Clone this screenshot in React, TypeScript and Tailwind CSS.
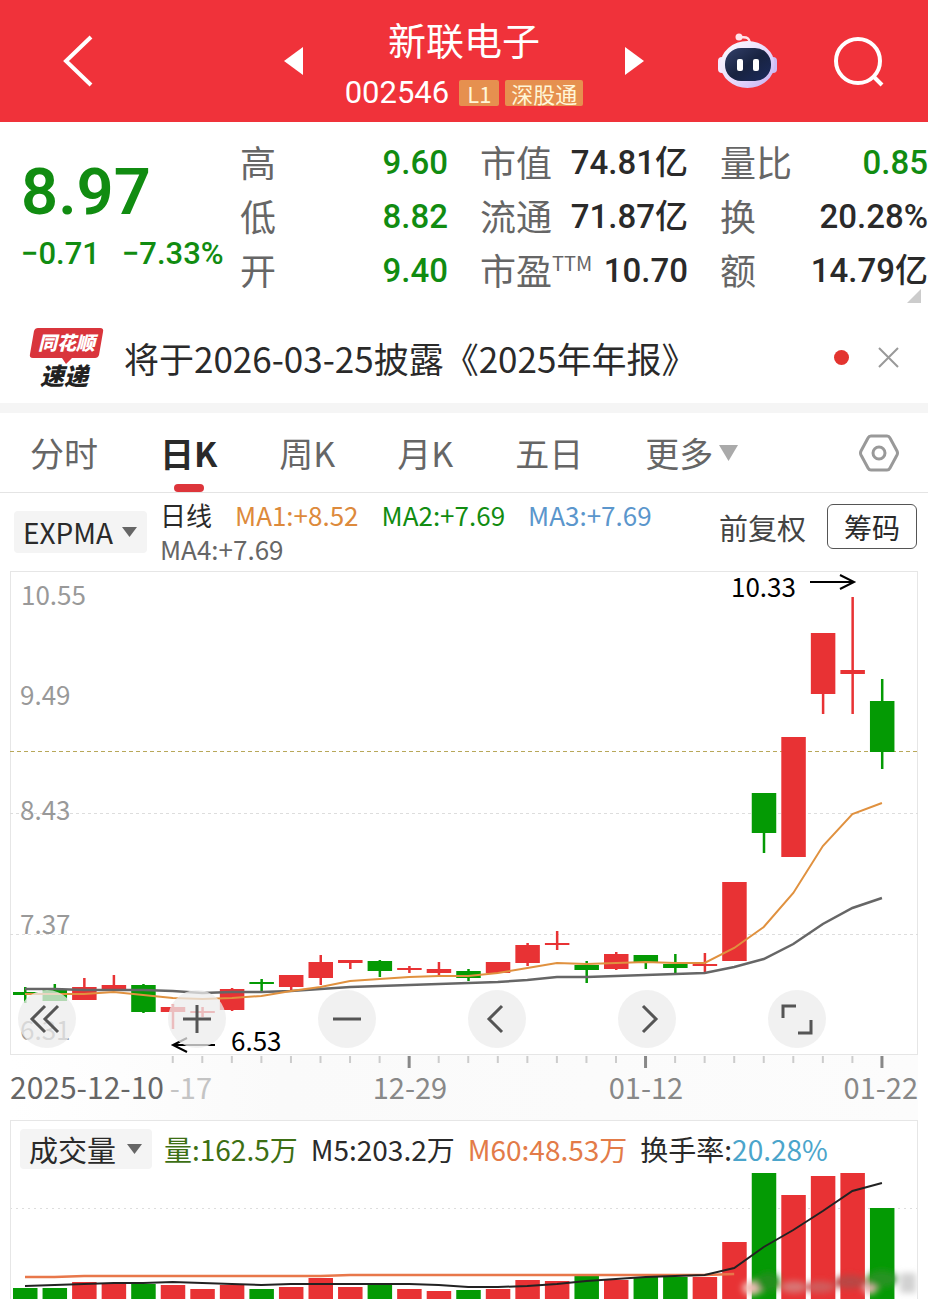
import React from 'react';

const RED = '#e83234';
const GREEN = '#049a04';
const STEP = 29.55;
const xAt = (i: number) => 15 + i * STEP;

type Candle = { up: boolean; high: number; top: number; bottom: number; low: number; vol: number };

const c = (up: boolean, high: number, top: number, bottom: number, low: number, vol: number): Candle => ({
  up, high, top, bottom, low, vol,
});

// high / body top / body bottom / low are measured down from the top of the price plot
const candles: Candle[] = [
  c(false, 416, 421, 424, 432, 11),
  c(false, 413, 418, 430, 430, 11),
  c(true, 407, 416, 429, 429, 17),
  c(true, 404, 414, 419, 419, 16),
  c(false, 413, 414, 441, 442, 15),
  c(true, 433, 436, 441, 458, 14),
  c(true, 436, 440, 442, 446, 10),
  c(true, 417, 418, 439, 440, 14),
  c(false, 408, 411, 413, 420, 10),
  c(true, 404, 404, 416, 419, 12),
  c(true, 384, 391, 407, 414, 21),
  c(true, 389, 389, 392, 398, 12),
  c(false, 389, 390, 400, 406, 14),
  c(true, 395, 397, 399, 402, 10),
  c(true, 391, 398, 402, 404, 8),
  c(false, 398, 400, 407, 410, 9),
  c(true, 391, 391, 402, 402, 10),
  c(true, 372, 374, 392, 395, 19),
  c(true, 360, 372, 374, 379, 18),
  c(false, 390, 394, 399, 412, 25),
  c(true, 381, 383, 398, 399, 19),
  c(false, 384, 384, 392, 398, 22),
  c(false, 383, 393, 397, 402, 22),
  c(true, 382, 393, 395, 403, 22),
  c(true, 311, 311, 390, 390, 57),
  c(false, 222, 222, 262, 282, 126),
  c(true, 166, 166, 286, 286, 104),
  c(true, 62, 62, 123, 143, 123),
  c(true, 26, 99, 103, 143, 126),
  c(false, 108, 130, 181, 198, 91),
];

const ma1 = [423, 423, 423, 421, 424, 427, 428, 427, 425, 420, 416, 410, 408, 406, 405, 405, 402, 397, 392, 393, 392, 391, 392, 392, 377, 356, 322, 275, 243, 232];
const ma2 = [418, 418, 419, 419, 419, 420, 422, 421, 421, 420, 418, 416, 415, 414, 413, 412, 411, 409, 406, 406, 405, 404, 403, 402, 396, 388, 373, 353, 337, 327];
const m5 = [117, 116, 115, 114, 114, 113, 114, 115, 116, 115, 115, 115, 115, 115, 116, 118, 118, 117, 115, 112, 110, 108, 107, 106, 99, 78, 61, 42, 22, 14];
const m60 = [108, 108, 107, 107, 107, 107, 107, 107, 107, 107, 107, 106, 106, 106, 106, 106, 106, 106, 106, 106, 106, 106, 106, 106, 105];

const toPoints = (ys: number[]) => ys.map((y, i) => `${xAt(i)},${y}`).join(' ');

const priceLabels = [
  { text: '10.55', x: 11, y: 34 },
  { text: '9.49', x: 10, y: 134 },
  { text: '8.43', x: 10, y: 249 },
  { text: '7.37', x: 10, y: 363 },
  { text: '6.31', x: 10, y: 469 },
];

const quoteColumns = [
  [
    { label: '高', value: '9.60', green: true },
    { label: '低', value: '8.82', green: true },
    { label: '开', value: '9.40', green: true },
  ],
  [
    { label: '市值', value: '74.81亿' },
    { label: '流通', value: '71.87亿' },
    { label: '市盈', sup: 'TTM', value: '10.70' },
  ],
  [
    { label: '量比', value: '0.85', green: true },
    { label: '换', value: '20.28%' },
    { label: '额', value: '14.79亿' },
  ],
];

const tabs = ['分时', '日K', '周K', '月K', '五日'];

const Header: React.FC = () => (
  <header className="grid h-[122px] grid-cols-[1fr_auto_1fr] items-center bg-[#f0323a] text-white">
    <div className="pl-[62px]">
      <button type="button" aria-label="返回" className="block">
        <svg width="32" height="52" viewBox="0 0 32 52" fill="none" stroke="currentColor" strokeWidth="4" aria-hidden="true">
          <path d="M29 2 4 26l25 24" />
        </svg>
      </button>
    </div>
    <div className="flex w-[360px] items-center justify-between">
      <button type="button" aria-label="上一只">
        <svg width="19" height="28" viewBox="0 0 19 28" fill="currentColor" aria-hidden="true"><path d="M19 0v28L0 14z" /></svg>
      </button>
      <div className="flex flex-col items-center pt-1">
        <h1 className="text-[38px] leading-[56px]">新联电子</h1>
        <div className="mt-1 flex items-center gap-[6px]">
          <span className="mr-1 font-['Roboto',sans-serif] text-[31px] leading-[44px]">002546</span>
          <span className="rounded-xs bg-[#e6904f] px-2 text-[22px] leading-[26px] text-[#fff6d8]">L1</span>
          <span className="rounded-xs bg-[#e6904f] px-[6px] text-[22px] leading-[26px] text-[#fff6d8]">深股通</span>
        </div>
      </div>
      <button type="button" aria-label="下一只">
        <svg width="19" height="28" viewBox="0 0 19 28" fill="currentColor" aria-hidden="true"><path d="M0 0v28l19-14z" /></svg>
      </button>
    </div>
    <div className="flex items-center justify-end gap-14 pr-[43px]">
      <button type="button" aria-label="智能助手">
        <svg width="60" height="56" viewBox="0 0 60 56" aria-hidden="true">
          <defs>
            <linearGradient id="shell" x1="0" y1="0" x2="1" y2="1">
              <stop offset="0" stopColor="#fff" />
              <stop offset="0.6" stopColor="#e3d6fb" />
              <stop offset="1" stopColor="#c3adf2" />
            </linearGradient>
            <linearGradient id="visor" x1="0" y1="0" x2="1" y2="1">
              <stop offset="0" stopColor="#33406b" />
              <stop offset="0.5" stopColor="#182340" />
              <stop offset="1" stopColor="#1b2a5c" />
            </linearGradient>
          </defs>
          <path d="M23 4c5 1 9-1 10 6" fill="none" stroke="#ffe3ea" strokeWidth="2.500" />
          <circle cx="22" cy="4" r="3.500" fill="#ffe3ea" />
          <rect x="1" y="24" width="8" height="16" rx="4" fill="#f6e9ff" />
          <rect x="52" y="24" width="8" height="16" rx="4" fill="#cdbcf5" />
          <ellipse cx="30.500" cy="31.500" rx="27" ry="23.500" fill="url(#shell)" />
          <rect x="8" y="15" width="46" height="33" rx="16" fill="url(#visor)" />
          <rect x="20" y="26" width="6" height="12" rx="2" fill="#fff" />
          <rect x="36" y="26" width="6" height="12" rx="2" fill="#fff" />
        </svg>
      </button>
      <button type="button" aria-label="搜索">
        <svg width="52" height="52" viewBox="0 0 52 52" fill="none" stroke="currentColor" strokeWidth="4" aria-hidden="true">
          <circle cx="25" cy="26" r="22" />
          <path d="m40 41 9 9" />
        </svg>
      </button>
    </div>
  </header>
);

const Quote: React.FC = () => (
  <section className="relative flex pt-[14px] pb-[18px]">
    <div className="w-[240px] shrink-0 pt-4 pl-[21px] font-['Roboto',sans-serif] text-[#118c11]">
      <div className="text-[65px] leading-[80px] font-semibold">8.97</div>
      <div className="flex gap-[22px] text-[31px] leading-[44px] font-medium">
        <span>−0.71</span>
        <span>−7.33%</span>
      </div>
    </div>
    <div className="grid flex-1 grid-cols-3 gap-8">
      {quoteColumns.map((rows, i) => (
        <dl key={i}>
          {rows.map((row) => (
            <div key={row.label} className="flex h-[54px] items-start justify-between whitespace-nowrap">
              <dt className="flex text-[36px] leading-[50px] text-[#666]">
                {row.label}
                {row.sup && <span className="text-[20px] leading-[38px]">{row.sup}</span>}
              </dt>
              <dd className={`font-['Roboto','Noto_Sans_CJK_SC',sans-serif] text-[33px] leading-[54px] font-medium ${row.green ? 'text-[#118c11]' : 'text-[#2a2a2a]'}`}>
                {row.value}
              </dd>
            </div>
          ))}
        </dl>
      ))}
    </div>
    <svg className="absolute right-[7px] bottom-[13px]" width="14" height="14" viewBox="0 0 14 14" fill="#ccc" aria-hidden="true">
      <path d="M14 0v14H0z" />
    </svg>
  </section>
);

const News: React.FC = () => (
  <section className="flex h-[87px] items-center pr-[29px] pb-1 pl-[30px]">
    <svg width="74" height="60" viewBox="0 0 74 60" role="img" aria-label="同花顺速递" className="shrink-0 overflow-visible">
      <path d="M8 0h62q4 0 3 4l-4 23q-1 3-4 3H42l-6 6-4-6H3q-4 0-3-4L4 3q1-3 4-3z" fill="#d9353c" />
      <text x="8" y="22" fill="#fff" className="text-[19px] font-black italic">同花顺</text>
      <text x="10" y="57" fill="#222" className="text-[24px] font-black italic">速递</text>
    </svg>
    <a href="#report" className="ml-5 text-[35px] leading-[48px] whitespace-nowrap text-[#2a2a2a]">将于2026-03-25披露《2025年年报》</a>
    <span className="ml-auto size-[15px] rounded-full bg-[#e3342f]" />
    <button type="button" aria-label="关闭" className="ml-[29px] text-[#999]">
      <svg width="21" height="21" viewBox="0 0 21 21" fill="none" stroke="currentColor" strokeWidth="2" aria-hidden="true">
        <path d="m1 1 19 19M20 1 1 20" />
      </svg>
    </button>
  </section>
);

const Tabs: React.FC = () => (
  <nav className="flex h-20 items-center gap-[62px] border-b border-[#e4e4e4] pr-[29px] pl-[30px] text-[34px] leading-[50px] text-[#666]">
    {tabs.map((tab) => (
      <button
        key={tab}
        type="button"
        className={tab === '日K' ? 'relative h-full font-bold whitespace-nowrap text-[#2a2a2a]' : 'whitespace-nowrap'}
      >
        {tab}
        {tab === '日K' && <span className="absolute bottom-0 left-1/2 h-2 w-[30px] -translate-x-1/2 rounded bg-[#dd353b]" />}
      </button>
    ))}
    <button type="button" className="flex items-center gap-[6px] whitespace-nowrap">
      更多
      <svg width="19" height="16" viewBox="0 0 19 16" fill="#aaa" aria-hidden="true"><path d="M0 0h19L9.500 16z" /></svg>
    </button>
    <button type="button" aria-label="设置" className="ml-auto text-[#999]">
      <svg width="40" height="38" viewBox="0 0 40 38" fill="none" stroke="currentColor" strokeWidth="3" strokeLinejoin="round" aria-hidden="true">
        <path d="M12 2h16q2 0 3 2l7 13q1 2 0 4l-7 13q-1 2-3 2H12q-2 0-3-2L2 21q-1-2 0-4L9 4q1-2 3-2z" />
        <circle cx="20" cy="19" r="6" />
      </svg>
    </button>
  </nav>
);

const Dropdown: React.FC<{ label: string; value: string; className: string }> = ({ label, value, className }) => (
  <div className={`relative flex shrink-0 items-center rounded-sm bg-[#f4f4f4] ${className}`}>
    <select aria-label={label} className="h-full w-full appearance-none bg-transparent pl-[9px] text-[#2a2a2a]">
      <option>{value}</option>
    </select>
    <svg className="pointer-events-none absolute right-[10px]" width="15" height="12" viewBox="0 0 15 12" fill="#666" aria-hidden="true">
      <path d="M0 1h15l-7.500 10z" />
    </svg>
  </div>
);

const Indicators: React.FC = () => (
  <section className="flex h-[78px] items-center pr-[11px] pl-[14px]">
    <Dropdown label="主图指标" value="EXPMA" className="h-[42px] w-[133px] text-[28px]" />
    <div className="ml-[13px] flex w-[520px] flex-wrap gap-x-[23px] text-[26px] leading-[34px]">
      <span className="text-[#2a2a2a]">日线</span>
      <span className="text-[#dd8a3c]">MA1:+8.52</span>
      <span className="text-[#118c11]">MA2:+7.69</span>
      <span className="text-[#5b96cc]">MA3:+7.69</span>
      <span className="text-[#666]">MA4:+7.69</span>
    </div>
    <div className="ml-auto flex items-center gap-[21px] self-start pt-[11px] whitespace-nowrap">
      <button type="button" className="text-[29px] leading-[42px] text-[#444]">前复权</button>
      <button type="button" className="h-[45px] w-[90px] rounded-md border border-[#555] text-[28px] leading-[42px] text-[#2a2a2a]">筹码</button>
    </div>
  </section>
);

const controls = [
  { label: '最早', path: 'M27 16 14 29l13 13M40 16 27 29l13 13' },
  { label: '放大', path: 'M15 29h28M29 15v28' },
  { label: '缩小', path: 'M15 29h28' },
  { label: '向左', path: 'M34 16 21 29l13 13' },
  { label: '向右', path: 'M25 16 38 29 25 42' },
  { label: '全屏', path: 'M15 28V16h13M43 30v13H30' },
];

const PriceChart: React.FC = () => (
  <section className="relative mx-[10px]">
    <svg viewBox="0 0 908 549" className="block h-auto w-full overflow-visible" role="img" aria-label="日K线图">
      <defs>
        <linearGradient id="axis" x1="0" y1="0" x2="1" y2="0">
          <stop offset="0" stopColor="#fff" />
          <stop offset="0.3" stopColor="#fafafa" />
          <stop offset="1" stopColor="#fcfcfc" />
        </linearGradient>
      </defs>
      <rect x="0" y="484" width="908" height="65" fill="url(#axis)" />
      <rect x="0.500" y="0.500" width="907" height="483" fill="none" stroke="#e6e6e6" />
      {[242.5, 363.5].map((y) => (
        <line key={y} x1="0" x2="908" y1={y} y2={y} stroke="#ddd" strokeDasharray="3 3" />
      ))}
      <line x1="0" x2="908" y1="180.500" y2="180.500" stroke="#b8a85a" strokeDasharray="4 3" />
      {priceLabels.map((l) => (
        <text key={l.text} x={l.x} y={l.y} fill="#999" className="text-[26px]">{l.text}</text>
      ))}
      {candles.map((k, i) => (
        <g key={i} fill={k.up ? RED : GREEN}>
          <rect x={xAt(i) - 1} y={k.high} width="2.500" height={k.low - k.high} />
          <rect x={xAt(i) - 12} y={k.top} width="24.500" height={k.bottom - k.top} />
        </g>
      ))}
      <polyline points={toPoints(ma2)} fill="none" stroke="#666" strokeWidth="2.500" />
      <polyline points={toPoints(ma1)} fill="none" stroke="#e0913f" strokeWidth="2" />
      <g fill="none" stroke="#000" strokeWidth="2">
        <path d="M800 11h43M830 4l14 7-14 7" />
        <path d="M205 474h-42M177 467l-14 7 14 7" />
      </g>
      <text x="721" y="26" className="text-[26px]">10.33</text>
      <text x="221" y="480" className="text-[26px]">6.53</text>
      {candles.map((_, i) => {
        if (i < 5) return null;
        const major = i === 13 || i === 21 || i === 29;
        return (
          <line key={i} x1={xAt(i)} x2={xAt(i)} y1="485" y2={major ? 497 : 492} stroke={major ? '#888' : '#ccc'} strokeWidth={major ? 3 : 2} />
        );
      })}
      <g className="text-[29px]" fill="#888">
        <text x="0" y="528" fill="#666" className="text-[30px]">2025-12-10</text>
        <text x="202" y="528" textAnchor="end" fill="#c4c4c4">-17</text>
        <text x="400" y="528" textAnchor="middle">12-29</text>
        <text x="636" y="528" textAnchor="middle">01-12</text>
        <text x="908" y="528" textAnchor="end">01-22</text>
      </g>
    </svg>
    <div className="absolute bottom-[72px] left-2 flex gap-[92px]">
      {controls.map((b) => (
        <button key={b.label} type="button" aria-label={b.label} className="size-[58px] rounded-full bg-[#ececec]/75 text-[#555]">
          <svg width="58" height="58" viewBox="0 0 58 58" fill="none" stroke="currentColor" strokeWidth="3" aria-hidden="true">
            <path d={b.path} />
          </svg>
        </button>
      ))}
    </div>
  </section>
);

const VolumeChart: React.FC = () => (
  <section className="mx-[10px] mb-[5px] border border-b-0 border-[#e6e6e6] pt-2">
    <div className="flex items-center pl-[9px] text-[28px] leading-[40px] whitespace-nowrap">
      <Dropdown label="副图指标" value="成交量" className="h-10 w-[132px] text-[29px]" />
      <div className="ml-3 flex gap-[13px]">
        <span className="text-[#3d6f14]">量:162.5万</span>
        <span className="text-[#2a2a2a]">M5:203.2万</span>
        <span className="text-[#e37b48]">M60:48.53万</span>
        <span className="text-[#2a2a2a]">换手率:<span className="text-[#4ba5cb]">20.28%</span></span>
      </div>
    </div>
    <svg viewBox="1 0 906 130" className="block h-auto w-full" role="img" aria-label="成交量图">
      <defs>
        <filter id="soft" x="-20%" y="-50%" width="140%" height="200%">
          <feGaussianBlur stdDeviation="3" />
        </filter>
      </defs>
      <line x1="0" x2="908" y1="39.500" y2="39.500" stroke="#ddd" strokeDasharray="2 4" />
      {candles.map((k, i) => (
        <rect key={i} x={xAt(i) - 12} y={130 - k.vol} width="24.500" height={k.vol} fill={k.up ? RED : GREEN} />
      ))}
      <polyline points={toPoints(m60)} fill="none" stroke="#e8774a" strokeWidth="2.500" />
      <polyline points={toPoints(m5)} fill="none" stroke="#222" strokeWidth="2" />
      <g filter="url(#soft)">
        <ellipse cx="742" cy="119" rx="10" ry="7" fill="#f0c0b8" />
        <ellipse cx="758" cy="113" rx="12" ry="10" fill="#238f1c" />
        <ellipse cx="784" cy="118" rx="13" ry="6" fill="#d87674" />
        <ellipse cx="810" cy="118" rx="15" ry="6" fill="#d05c5c" />
        <ellipse cx="840" cy="113" rx="16" ry="7" fill="#b94644" />
        <ellipse cx="860" cy="120" rx="7" ry="5" fill="#e9b6b4" />
        <ellipse cx="872" cy="110" rx="15" ry="9" fill="#279321" />
        <rect x="890" y="104" width="16" height="20" fill="#d2d2d2" />
      </g>
    </svg>
  </section>
);

const App: React.FC = () => (
  <main className="w-full overflow-hidden bg-white font-['Noto_Sans_CJK_SC',sans-serif]">
    <Header />
    <Quote />
    <News />
    <div className="h-[10px] bg-[#f5f5f5]" />
    <Tabs />
    <Indicators />
    <PriceChart />
    <VolumeChart />
  </main>
);

export default App;
